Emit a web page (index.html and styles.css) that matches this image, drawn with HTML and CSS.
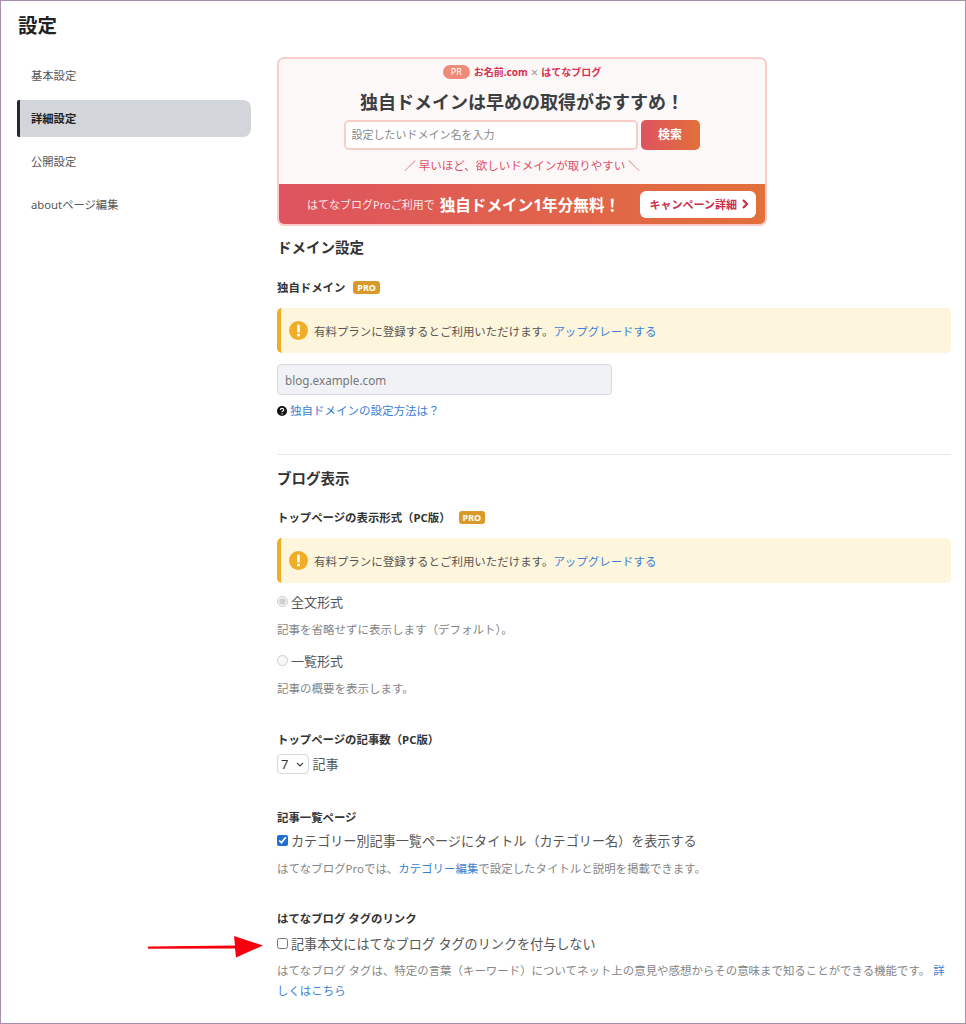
FILE: index.html
```html
<!DOCTYPE html>
<html lang="ja">
<head>
    <meta charset="UTF-8">
    <meta name="viewport" content="width=device-width, initial-scale=1.0">
    <title>設定</title>
    <link rel="stylesheet" href="styles.css">
</head>
<body>
    <div class="frame">
        <aside class="side">
            <h1>設定</h1>
            <a class="nav-item" href="#">基本設定</a>
            <a class="nav-item active" href="#">詳細設定</a>
            <a class="nav-item" href="#">公開設定</a>
            <a class="nav-item" href="#">aboutページ編集</a>
        </aside>

        <main class="main">
            <div class="banner">
                <div class="banner-top">
                    <p class="banner-pr"><span class="pill">PR</span><b>お名前.com</b><span class="times">×</span><b>はてなブログ</b></p>
                    <p class="banner-title">独自ドメインは早めの取得がおすすめ！</p>
                    <div class="banner-form">
                        <div class="banner-input">設定したいドメイン名を入力</div>
                        <div class="banner-btn">検索</div>
                    </div>
                    <p class="banner-note">／ 早いほど、欲しいドメインが取りやすい ＼</p>
                </div>
                <div class="banner-bottom">
                    <span class="banner-lead">はてなブログProご利用で</span>
                    <span class="banner-free">独自ドメイン1年分無料！</span>
                    <span class="banner-more">キャンペーン詳細
                        <svg width="8" height="10" viewBox="0 0 8 10"><path d="M2 1l4 4-4 4" fill="none" stroke="#c9304a" stroke-width="2.2"/></svg>
                    </span>
                </div>
            </div>

            <h2 class="sec-title first">ドメイン設定</h2>
            <h3 class="label label-domain">独自ドメイン <span class="pro">PRO</span></h3>
            <div class="notice">
                <svg class="notice-icon" width="19" height="19" viewBox="0 0 19 19"><circle cx="9.5" cy="9.5" r="9.5" fill="#f0ad25"/><rect x="8.2" y="3.6" width="2.6" height="8" rx="1.2" fill="#fff"/><circle cx="9.5" cy="14" r="1.6" fill="#fff"/></svg>
                <span>有料プランに登録するとご利用いただけます。<a href="#">アップグレードする</a></span>
            </div>
            <div class="text-input">blog.example.com</div>
            <p class="help">
                <svg width="10" height="10" viewBox="0 0 10 10"><circle cx="5" cy="5" r="5" fill="#111"/><path d="M3.4 3.9c0-2.1 3.3-2.1 3.3 0 0 1.2-1.7 1.1-1.7 2.3" fill="none" stroke="#fff" stroke-width="1.1"/><circle cx="5" cy="7.9" r=".7" fill="#fff"/></svg>
                <a href="#">独自ドメインの設定方法は？</a>
            </p>

            <hr class="sep">

            <h2 class="sec-title">ブログ表示</h2>
            <h3 class="label">トップページの表示形式（PC版） <span class="pro">PRO</span></h3>
            <div class="notice">
                <svg class="notice-icon" width="19" height="19" viewBox="0 0 19 19"><circle cx="9.5" cy="9.5" r="9.5" fill="#f0ad25"/><rect x="8.2" y="3.6" width="2.6" height="8" rx="1.2" fill="#fff"/><circle cx="9.5" cy="14" r="1.6" fill="#fff"/></svg>
                <span>有料プランに登録するとご利用いただけます。<a href="#">アップグレードする</a></span>
            </div>
            <label class="opt first-opt"><input type="radio" name="fmt" checked disabled>全文形式</label>
            <p class="desc">記事を省略せずに表示します（デフォルト）。</p>
            <label class="opt"><input type="radio" name="fmt" disabled>一覧形式</label>
            <p class="desc">記事の概要を表示します。</p>

            <h3 class="label count-label">トップページの記事数（PC版）</h3>
            <div class="count"><select><option>7</option></select> 記事</div>

            <h3 class="label list-label">記事一覧ページ</h3>
            <label class="check check-list"><input type="checkbox" checked>カテゴリー別記事一覧ページにタイトル（カテゴリー名）を表示する</label>
            <p class="desc check-desc">はてなブログProでは、<a href="#">カテゴリー編集</a>で設定したタイトルと説明を掲載できます。</p>

            <h3 class="label tag-label">はてなブログ タグのリンク</h3>
            <label class="check"><input type="checkbox">記事本文にはてなブログ タグのリンクを付与しない</label>
            <p class="desc check-desc wrap">はてなブログ タグは、特定の言葉（キーワード）についてネット上の意見や感想からその意味まで知ることができる機能です。 <a href="#">詳しくはこちら</a></p>
        </main>

        <svg class="arrow" width="116" height="22" viewBox="0 0 116 22"><path d="M0 10.5L87 9.4 86 0 115 9.5 88 21.5 87 12.6 0 12.8z" fill="#f5000c"/></svg>
    </div>
</body>
</html>
```

FILE: styles.css
```css
* {
    box-sizing: border-box;
}
body {
    margin: 0;
    font-family: "Noto Sans", "Noto Sans CJK JP", sans-serif;
    color: #555;
    background: #fff;
}
a {
    color: #3b7fd4;
    text-decoration: none;
}
p, h1, h2, h3 {
    margin: 0;
}
.frame {
    position: relative;
    display: flex;
    height: 1024px;
    overflow: hidden;
    border: 1px solid #a78fb0;
}
.side {
    width: 250px;
    margin-left: 16px;
    flex-shrink: 0;
}
.side h1 {
    margin: 11px 0 18px 1px;
    font-size: 19.5px;
    line-height: 27px;
    color: #222;
}
.nav-item {
    display: block;
    height: 37px;
    margin-bottom: 6px;
    padding-left: 14px;
    font-size: 11.3px;
    line-height: 37px;
    color: #555;
}
.nav-item.active {
    width: 234px;
    border-left: 3px solid #24272c;
    border-radius: 2px 8px 8px 2px;
    padding-left: 11px;
    background: #d2d5da;
    color: #222;
    font-weight: 700;
}
.main {
    width: 674px;
    margin-left: 10px;
    padding-top: 56px;
}
.banner {
    width: 490px;
    height: 169px;
    border: 2px solid #fbcccc;
    border-radius: 7px;
    overflow: hidden;
    background: #fdf8f8;
}
.banner-top {
    height: 125px;
    text-align: center;
}
.banner-pr {
    display: flex;
    justify-content: center;
    align-items: center;
    gap: 3px;
    height: 24px;
    padding-top: 1px;
    font-size: 10px;
    color: #d9304f;
}
.pill {
    width: 27px;
    height: 14px;
    margin-right: 1px;
    border-radius: 7px;
    background: #ef8b78;
    color: #fff;
    font-size: 9px;
    line-height: 14px;
}
.times {
    color: #999;
    font-size: 13px;
    line-height: 14px;
}
.banner-title {
    margin-top: 6px;
    font-size: 18px;
    line-height: 26px;
    font-weight: 700;
    color: #3c3f42;
}
.banner-form {
    display: flex;
    justify-content: center;
    gap: 3px;
    margin-top: 5px;
    padding-right: 1px;
}
.banner-input {
    width: 294px;
    height: 30px;
    border: 2px solid #f9cdc8;
    border-radius: 5px;
    padding-left: 6px;
    background: #fff;
    text-align: left;
    font-size: 11px;
    line-height: 26px;
    color: #888;
}
.banner-btn {
    width: 59px;
    height: 30px;
    border-radius: 5px;
    background: linear-gradient(90deg, #de5360, #e2703a);
    color: #fff;
    font-size: 12px;
    font-weight: 700;
    line-height: 30px;
}
.banner-note {
    margin-top: 7px;
    font-size: 11.5px;
    line-height: 17px;
    color: #dc4f68;
}
.banner-bottom {
    display: flex;
    align-items: center;
    height: 40px;
    padding: 0 9px 0 28px;
    background: linear-gradient(90deg, #de5360, #e2703a);
    color: #fff;
}
.banner-lead {
    font-size: 11px;
    opacity: 0.85;
}
.banner-free {
    margin-left: 5px;
    font-size: 15.6px;
    font-weight: 700;
}
.banner-more {
    display: flex;
    align-items: center;
    gap: 4px;
    height: 27px;
    margin-left: auto;
    padding: 0 7px 0 10px;
    border-radius: 6px;
    background: #fff;
    color: #c9304a;
    font-size: 11px;
    font-weight: 700;
}
.sec-title {
    margin-top: 12px;
    font-size: 14.5px;
    line-height: 22px;
    color: #333;
}
.sec-title.first {
    margin-top: 10px;
}
.label {
    margin-top: 20px;
    font-size: 11.4px;
    line-height: 17px;
    color: #333;
}
.label-domain {
    margin-top: 21px;
}
.pro {
    display: inline-block;
    margin-left: 5px;
    padding: 0 4px;
    height: 13px;
    border-radius: 3px;
    background: #d99a2b;
    color: #fff;
    font-size: 9px;
    line-height: 13px;
    vertical-align: 1px;
}
.notice {
    display: flex;
    align-items: center;
    gap: 6px;
    height: 45px;
    margin-top: 12px;
    padding-left: 8px;
    border-left: 4px solid #f0ad25;
    border-radius: 5px;
    background: #fdf5dc;
    font-size: 11.46px;
}
.text-input {
    width: 335px;
    height: 31px;
    margin-top: 11px;
    padding-left: 7px;
    border: 1px solid #d5d8dd;
    border-radius: 4px;
    background: #f0f2f5;
    color: #777;
    font-size: 11.7px;
    line-height: 31px;
}
.help {
    display: flex;
    align-items: center;
    gap: 3px;
    margin-top: 7px;
    font-size: 11.5px;
    line-height: 18px;
}
.sep {
    margin: 34px 0 0;
    border: 0;
    border-top: 1px solid #e6e7e9;
}
.opt {
    display: flex;
    align-items: center;
    height: 20px;
    margin-top: 12px;
    font-size: 13px;
    color: #555;
}
.opt.first-opt {
    margin-top: 8px;
}
.opt input {
    width: 11px;
    height: 11px;
    margin: 0 3px 0 0;
}
.desc {
    margin-top: 10px;
    font-size: 11.5px;
    line-height: 17px;
    color: #858585;
}
.count-label {
    margin-top: 34px;
}
.count {
    margin-top: 6px;
    font-size: 13px;
}
.count select {
    width: 32px;
    height: 20px;
    padding: 0 0 0 3px;
    border: 1px solid #d8d8d8;
    border-radius: 4px;
    background: #fff url("data:image/svg+xml,%3Csvg xmlns='http://www.w3.org/2000/svg' width='8' height='5'%3E%3Cpath d='M1 1l3 3 3-3' fill='none' stroke='%23444' stroke-width='1.2'/%3E%3C/svg%3E") no-repeat right 4px center;
    color: #333;
    font-size: 13px;
    font-family: inherit;
    appearance: none;
}
.list-label {
    margin-top: 35px;
}
.check {
    display: flex;
    align-items: center;
    height: 20px;
    margin-top: 6px;
    font-size: 13.1px;
    color: #555;
}
.check-list {
    margin-top: 4px;
}
.check input {
    width: 11px;
    height: 11px;
    margin: 0 3px 0 0;
    accent-color: #1f6fd0;
}
.check-desc {
    font-size: 11.45px;
}
.wrap {
    margin-top: 8px;
    line-height: 20px;
}
.tag-label {
    margin-top: 33px;
}
.arrow {
    position: absolute;
    left: 147px;
    top: 935px;
}
```
